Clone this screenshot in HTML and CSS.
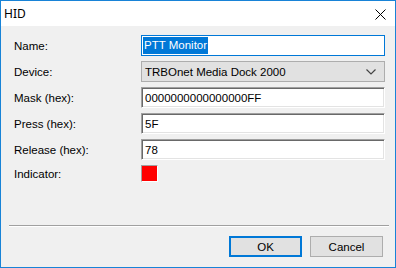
FILE: index.html
```html
<!DOCTYPE html>
<html lang="en">
<head>
    <meta charset="UTF-8">
    <title>HID</title>
    <link rel="stylesheet" href="styles.css">
</head>
<body>
    <div class="window">
        <div class="titlebar">
            <span class="title">HID</span>
            <span class="close">
                <svg width="11" height="11" viewBox="0 0 11 11">
                    <path d="M0.5 0.5 L10.5 10.5 M10.5 0.5 L0.5 10.5" stroke="#000" stroke-width="1" fill="none"/>
                </svg>
            </span>
        </div>

        <div class="content">
            <div class="form">
                <label>Name:</label>
                <div class="textbox focused"><span class="selected">PTT Monitor</span></div>

                <label>Device:</label>
                <div class="combo">
                    <span>TRBOnet Media Dock 2000</span>
                    <svg width="10" height="6" viewBox="0 0 10 6">
                        <path d="M0.5 0.5 L5 5 L9.5 0.5" stroke="#444" stroke-width="1.2" fill="none"/>
                    </svg>
                </div>

                <label>Mask (hex):</label>
                <div class="textbox sunken">0000000000000000FF</div>

                <label>Press (hex):</label>
                <div class="textbox sunken">5F</div>

                <label>Release (hex):</label>
                <div class="textbox sunken">78</div>

                <label class="short">Indicator:</label>
                <div class="indicator"></div>
            </div>

            <div class="separator"></div>

            <div class="buttons">
                <button class="btn default">OK</button>
                <button class="btn">Cancel</button>
            </div>
        </div>
    </div>
</body>
</html>
```

FILE: styles.css
```css
body {
    margin: 0;
    font-family: "Liberation Sans", Arial, sans-serif;
    font-size: 11.5px;
    color: #000;
    background: #fff;
}

.window {
    width: 396px;
    height: 268px;
    box-sizing: border-box;
    border: 1px solid #1883d7;
    background: #f0f0f0;
    display: flex;
    flex-direction: column;
}

.titlebar {
    height: 25px;
    background: #fff;
    display: flex;
    align-items: center;
    justify-content: space-between;
    padding: 0 9px 0 3px;
}

.title {
    font-size: 12px;
    font-family: "Noto Sans", sans-serif;
}

.close {
    display: flex;
    padding-top: 1px;
}

.content {
    padding: 9px 0 0 0;
}

.form {
    display: grid;
    grid-template-columns: 127px 244px;
    grid-auto-rows: 21px;
    row-gap: 5px;
    padding-left: 13px;
}

.form label {
    display: flex;
    align-items: center;
    color: #000;
}

.form label.short {
    align-self: start;
    height: 17px;
}

.textbox {
    box-sizing: border-box;
    background: #fff;
    display: flex;
    align-items: center;
    padding-left: 3px;
}

.textbox.focused {
    border: 1px solid #0078d7;
    padding-left: 1px;
}

.selected {
    background: #0078d7;
    color: #fff;
    line-height: 17px;
    padding: 0 1px;
}

.textbox.sunken {
    border: 1px solid;
    border-color: #a0a0a0 #fff #fff #a0a0a0;
    box-shadow: inset 1px 1px #696969, inset -1px -1px #e3e3e3;
}

.combo {
    box-sizing: border-box;
    border: 1px solid #adadad;
    background: #e1e1e1;
    display: flex;
    align-items: center;
    justify-content: space-between;
    padding: 0 8px 0 3px;
}

.combo svg {
    margin-top: 1px;
}

.indicator {
    width: 17px;
    height: 17px;
    box-sizing: border-box;
    background: #ff0000;
    border: 1px solid;
    border-color: #a0a0a0 #fff #fff #a0a0a0;
}

.separator {
    margin: 39px 6px 0 8px;
    border-top: 1px solid #a0a0a0;
    border-bottom: 1px solid #fff;
}

.buttons {
    display: flex;
    justify-content: flex-end;
    gap: 8px;
    margin-top: 9px;
    padding-right: 12px;
}

.btn {
    width: 73px;
    height: 21px;
    box-sizing: border-box;
    border: 1px solid #adadad;
    background: #e1e1e1;
    font-family: inherit;
    font-size: 11.5px;
    color: #000;
    padding: 0;
}

.btn.default {
    border: 2px solid #0078d7;
}
```
